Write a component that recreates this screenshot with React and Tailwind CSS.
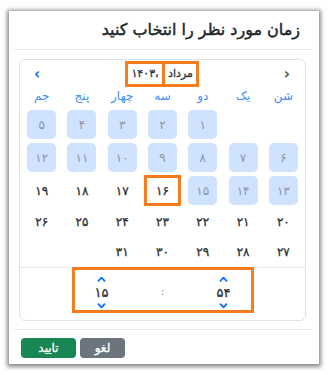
import React from 'react';

const fa = (n) => String(n).replace(/\d/g, (d) => '۰۱۲۳۴۵۶۷۸۹'[d]);

const weekdays = ['شن', 'یک', 'دو', 'سه', 'چهار', 'پنج', 'جم'];

const rows = [
  { h: 'h-[33px]', cells: [null, null, [1, 'dis'], [2, 'dis'], [3, 'dis'], [4, 'dis'], [5, 'dis']] },
  { h: 'h-[33px]', cells: [[6, 'dis'], [7, 'dis'], [8, 'dis'], [9, 'dis'], [10, 'dis'], [11, 'dis'], [12, 'dis']] },
  { h: 'h-[33px]', cells: [[13, 'dis'], [14, 'dis'], [15, 'dis'], [16, 'sel'], [17, 'n'], [18, 'n'], [19, 'n']] },
  { h: 'h-[30px]', cells: [[20, 'n'], [21, 'n'], [22, 'n'], [23, 'n'], [24, 'n'], [25, 'n'], [26, 'n']] },
  { h: 'h-[30px]', cells: [[27, 'n'], [28, 'n'], [29, 'n'], [30, 'n'], [31, 'n'], null, null] },
];

function Chevron({ up }) {
  return (
    <svg width="9" height="6" viewBox="0 0 9 6">
      <polyline
        points={up ? '1.5,4.8 4.5,1.6 7.5,4.8' : '1.5,1.2 4.5,4.4 7.5,1.2'}
        fill="none"
        stroke="#0d6efd"
        strokeWidth="1.8"
        strokeLinecap="round"
        strokeLinejoin="round"
      />
    </svg>
  );
}

function Cell({ c }) {
  if (!c) return <div />;
  const [v, k] = c;
  if (k === 'dis')
    return (
      <div className="flex items-center justify-center">
        <div className="w-[29px] h-[29px] rounded-[5px] bg-[#cfe2ff] flex items-center justify-center text-[12px] text-[#8d96a3]">
          {fa(v)}
        </div>
      </div>
    );
  if (k === 'sel')
    return (
      <div className="flex items-center justify-center">
        <div className="w-[37px] h-[31px] border-[3px] border-[#f67a1e] flex items-center justify-center text-[12px] text-[#2b2f33] [-webkit-text-stroke:0.3px_#2b2f33]">
          {fa(v)}
        </div>
      </div>
    );
  return (
    <div className="flex items-center justify-center text-[12px] text-[#2b2f33] [-webkit-text-stroke:0.3px_#2b2f33]">{fa(v)}</div>
  );
}

function TimeCol({ value }) {
  return (
    <div className="w-[24px] flex flex-col items-center pt-[4px]">
      <div className="h-[10px] flex items-center justify-center">
        <Chevron up />
      </div>
      <div className="h-[18px] flex items-center justify-center text-[13px] text-[#2b2f33] [-webkit-text-stroke:0.3px_#2b2f33]">
        {value}
      </div>
      <div className="h-[8px] flex items-center justify-center">
        <Chevron />
      </div>
    </div>
  );
}

export default function App() {
  return (
    <div className="w-[329px] h-[375px] bg-white overflow-hidden pt-[11px] pl-[9px]" style={{ fontFamily: '"DejaVu Sans", sans-serif' }}>
      <div dir="rtl" className="w-[310px] h-[353px] bg-white shadow-[0_1px_4px_2px_rgba(0,0,0,0.45)] flex flex-col">
        <div className="h-[38px] flex items-center pr-[19px]">
          <h1 className="text-[16px] font-normal text-[#212529] leading-none [-webkit-text-stroke:0.45px_#212529]">
            زمان مورد نظر را انتخاب کنید
          </h1>
        </div>
        <div className="h-px bg-[#e5e7ea] mr-[8px] ml-[5px]" />

        <div className="mt-[9px] mr-[13px] ml-[10px] h-[262px] border border-[#dfe3e8] rounded-[6px] flex flex-col">
          <div className="h-[28px] flex items-center justify-between pr-[15px] pl-[14px]">
            <span className="text-[15px] text-[#555] font-bold leading-none">‹</span>
            <div className="flex items-center">
              <div className="w-[37px] h-[26px] border-[3px] border-[#f67a1e] flex items-center justify-center text-[11px] text-[#2b2f33] [-webkit-text-stroke:0.3px_#2b2f33]">
                مرداد
              </div>
              <div className="w-[37px] h-[26px] border-[3px] border-[#f67a1e] border-r-0 flex items-center justify-center text-[11px] text-[#2b2f33] [-webkit-text-stroke:0.3px_#2b2f33]">
                <span>،</span>
                <span>{fa(1403)}</span>
              </div>
            </div>
            <span className="text-[15px] text-[#0d6efd] font-bold leading-none">›</span>
          </div>

          <div className="w-[282px] mx-auto grid grid-cols-7 h-[16px] items-center">
            {weekdays.map((w) => (
              <div key={w} className="text-center text-[12px] text-[#3d8bfd] leading-none">
                {w}
              </div>
            ))}
          </div>

          <div className="w-[282px] mx-auto mt-[4px] flex flex-col">
            {rows.map((r, i) => (
              <div key={i} className={`grid grid-cols-7 ${r.h}`}>
                {r.cells.map((c, j) => (
                  <Cell key={j} c={c} />
                ))}
              </div>
            ))}
          </div>

          <div className="border-t border-[#e3e6ea] flex justify-center">
            <div dir="ltr" className="-mt-px w-[182px] h-[46px] border-[3px] border-[#f67a1e] flex justify-between px-[15px]">
              <TimeCol value={fa(15)} />
              <div className="flex items-center pt-[5px] text-[11px] text-[#888]">:</div>
              <TimeCol value={fa(54)} />
            </div>
          </div>
        </div>

        <div className="h-px bg-[#e5e7ea] mt-[8px] mr-[8px] ml-[5px]" />
        <div dir="ltr" className="flex gap-[4px] pl-[12px] mt-[8px]">
          <button className="w-[55px] h-[20px] rounded-[4px] bg-[#198754] text-white text-[12px] flex items-center justify-center [-webkit-text-stroke:0.3px_#ffffff]">
            تایید
          </button>
          <button className="w-[45px] h-[20px] rounded-[4px] bg-[#6c757d] text-white text-[12px] flex items-center justify-center [-webkit-text-stroke:0.3px_#ffffff]">
            لغو
          </button>
        </div>
      </div>
    </div>
  );
}
